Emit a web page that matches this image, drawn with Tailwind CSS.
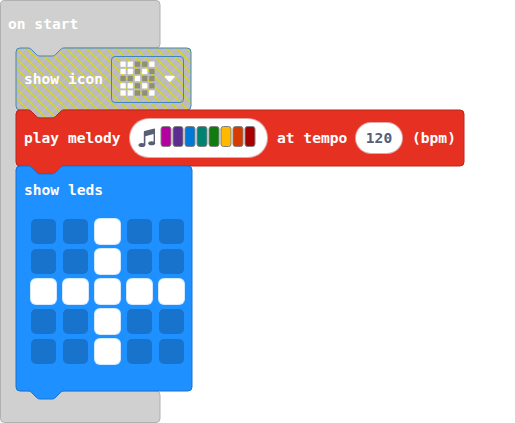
<!DOCTYPE html>
<html lang="en">
<head>
<meta charset="utf-8">
<title>Blocks</title>
<script src="https://cdn.jsdelivr.net/npm/@tailwindcss/browser@4"></script>
</head>
<body class="bg-white overflow-hidden">
<main class="relative isolate w-[515px] h-[423px] overflow-hidden font-['DejaVu_Sans_Mono',monospace] font-bold text-[14.6px] leading-[18px] text-white whitespace-nowrap">
  <svg class="absolute left-0 top-0 -z-10" width="515" height="423" fill="none">
    <defs>
      <pattern id="hatch" x="16" y="48" width="10" height="10" patternUnits="userSpaceOnUse">
        <rect width="10" height="10" fill="#bbb"/>
        <path d="M0 0L10 10M10 0L0 10" stroke="#d8d820"/>
      </pattern>
    </defs>
    <path d="M4.500 .5H156a4 4 0 0 1 4 4V44a4 4 0 0 1-4 4H64V58H20V391H156a4 4 0 0 1 4 4V418.500a4 4 0 0 1-4 4H4.500a4 4 0 0 1-4-4V4.500a4 4 0 0 1 4-4Z" fill="#d0d0d0" stroke="#b0b0b0"/>
    <path d="M28 47H65L52 57H40Z" fill="#d0d0d0"/>
    <path d="M16 52a4 4 0 0 1 4-4h8c2 0 3 1 4 2l4 4c1 1 2 2 4 2h12c2 0 3-1 4-2l4-4c1-1 2-2 4-2H187a4 4 0 0 1 4 4V106a4 4 0 0 1-4 4H64c-2 0-3 1-4 2l-4 4c-1 1-2 2-4 2H40c-2 0-3-1-4-2l-4-4c-1-1-2-2-4-2H20a4 4 0 0 1-4-4Z" fill="url(#hatch)" stroke="#3f86c0"/>
    <path d="M16 114a4 4 0 0 1 4-4h8c2 0 3 1 4 2l4 4c1 1 2 2 4 2h12c2 0 3-1 4-2l4-4c1-1 2-2 4-2H460a4 4 0 0 1 4 4V162a4 4 0 0 1-4 4H64c-2 0-3 1-4 2l-4 4c-1 1-2 2-4 2H40c-2 0-3-1-4-2l-4-4c-1-1-2-2-4-2H20a4 4 0 0 1-4-4Z" fill="#e63022" stroke="#b8261b"/>
    <path d="M16 170a4 4 0 0 1 4-4h8c2 0 3 1 4 2l4 4c1 1 2 2 4 2h12c2 0 3-1 4-2l4-4c1-1 2-2 4-2H188a4 4 0 0 1 4 4V387a4 4 0 0 1-4 4H64c-2 0-3 1-4 2l-4 4c-1 1-2 2-4 2H40c-2 0-3-1-4-2l-4-4c-1-1-2-2-4-2H20a4 4 0 0 1-4-4Z" fill="#1e90ff" stroke="#1873cc"/>
  </svg>

  <div class="h-12 pl-2 pt-[15px]">on start</div>

  <section class="ml-4 h-[62px] w-[176px] pl-2 flex items-center">
    <span class="w-[87px]">show icon</span>
    <div class="w-[73px] h-[47px] rounded-[4px] border-[1.5px] border-[#3f86c0] flex items-center pl-2">
      <svg width="36" height="36" viewBox="0 0 36 36">
        <path fill="#8f8f78" stroke="#8f8f78" stroke-opacity=".3" d="M15 .7h5v5h-5zM22.200 .7h5v5h-5zM15 7.900h5v5h-5zM29.400 7.900h5v5h-5zM.6 15.100h5v5h-5zM7.800 15.100h5v5h-5zM22.200 15.100h5v5h-5zM29.400 15.100h5v5h-5zM15 22.300h5v5h-5zM29.400 22.300h5v5h-5zM15 29.500h5v5h-5zM22.200 29.500h5v5h-5z"/>
        <path fill="#fff" stroke="#fff" stroke-opacity=".3" d="M.6 .7h5v5h-5zM7.800 .7h5v5h-5zM29.400 .7h5v5h-5zM.6 7.900h5v5h-5zM7.800 7.900h5v5h-5zM22.200 7.900h5v5h-5zM15 15.100h5v5h-5zM.6 22.300h5v5h-5zM7.800 22.300h5v5h-5zM22.200 22.300h5v5h-5zM.6 29.500h5v5h-5zM7.800 29.500h5v5h-5zM29.400 29.500h5v5h-5z"/>
      </svg>
      <svg class="ml-2" width="12" height="8" viewBox="0 0 12 8"><path d="M1.500 .8h8.400q1.500 0 .5 1.500L6.900 6.200q-1.200 1.200-2.400 0L1 2.300Q0 .8 1.500 .8Z" fill="#fff"/></svg>
    </div>
  </section>

  <section class="ml-4 h-14 w-[448px] pl-2 flex items-center">
    <span class="w-[105px]">play melody</span>
    <div class="w-[139px] h-10 rounded-full bg-white border border-[#b8261b]/40 flex items-center pl-2">
      <svg width="18" height="20" viewBox="0 0 18 20" fill="#575e75"><path d="M5.800 3.700Q6 3.200 6.500 3L16.300 .5Q17 .4 17 1V15H15.600V6L7.400 8.200V17H5.800Z"/><ellipse cx="3.900" cy="17" rx="3.400" ry="2"/><ellipse cx="13.700" cy="15.200" rx="3.400" ry="2"/></svg>
      <div class="flex gap-px ml-1 -mt-1 translate-x-[0.5px]">
        <i class="w-[11px] h-[21px] rounded-[3px] border border-[#808080] bg-[#b4009e]"></i>
        <i class="w-[11px] h-[21px] rounded-[3px] border border-[#808080] bg-[#5c2d91]"></i>
        <i class="w-[11px] h-[21px] rounded-[3px] border border-[#808080] bg-[#0078d7]"></i>
        <i class="w-[11px] h-[21px] rounded-[3px] border border-[#808080] bg-[#008272]"></i>
        <i class="w-[11px] h-[21px] rounded-[3px] border border-[#808080] bg-[#107c10]"></i>
        <i class="w-[11px] h-[21px] rounded-[3px] border border-[#808080] bg-[#ffb900]"></i>
        <i class="w-[11px] h-[21px] rounded-[3px] border border-[#808080] bg-[#d83b01]"></i>
        <i class="w-[11px] h-[21px] rounded-[3px] border border-[#808080] bg-[#a80000]"></i>
      </div>
    </div>
    <span class="w-[87px] pl-[9px]">at tempo</span>
    <div class="w-12 h-8 rounded-full bg-white border border-[#b8261b]/40 text-[#575e75] flex items-center justify-center">120</div>
    <span class="pl-[9px]">(bpm)</span>
  </section>

  <section class="ml-4 h-[225px] w-[176px] pl-2 pt-[15px]">
    <div class="h-[37px]">show leds</div>
    <div class="ml-[6px] grid grid-cols-[repeat(5,27px)] auto-rows-[27px] gap-x-[5px] gap-y-[3px]" id="leds"></div>
  </section>
</main>
<script>
  const rows = ['..#..', '..#..', '#####', '..#..', '..#..'];
  document.getElementById('leds').innerHTML = rows.join('').split('').map(c => c === '#'
    ? '<i class="rounded-[6px] bg-white border border-[#a5d3ff]/50"></i>'
    : '<i class="m-px rounded-[5px] bg-[#1873cc]"></i>').join('');
</script>
</body>
</html>
